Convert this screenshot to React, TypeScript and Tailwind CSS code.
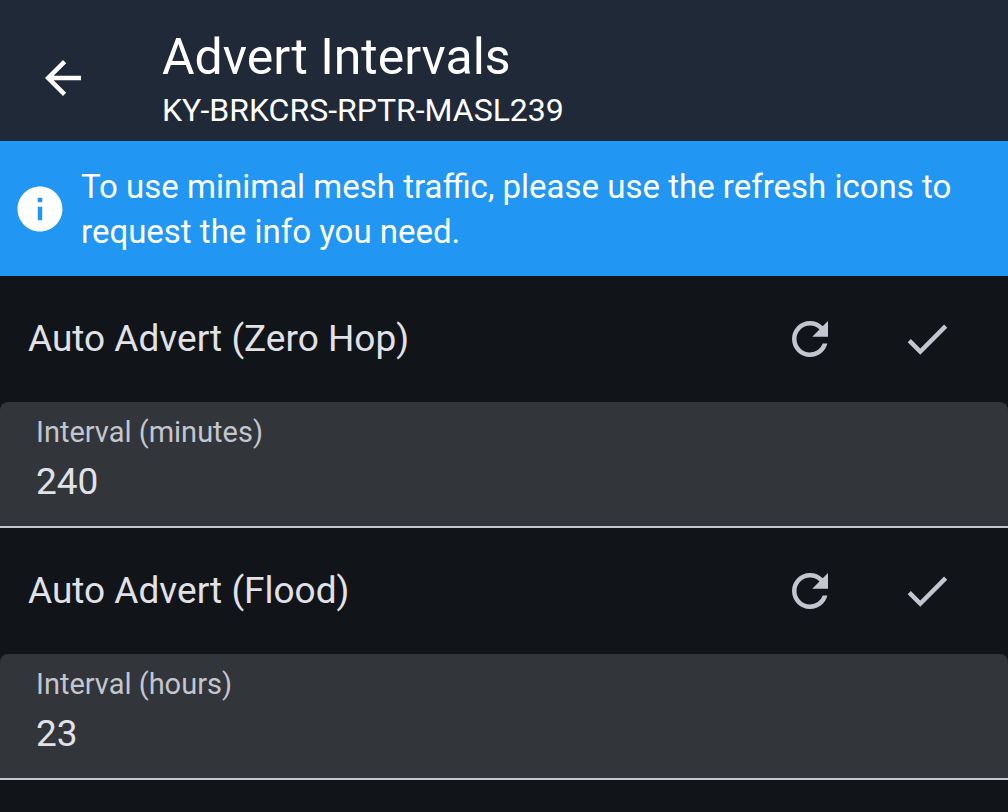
import { useState } from 'react';
import { MdArrowBack, MdCheck, MdInfo, MdRefresh } from 'react-icons/md';

type IntervalSetting = {
  id: string;
  title: string;
  label: string;
  initial: string;
};

const SETTINGS: IntervalSetting[] = [
  { id: 'zero-hop', title: 'Auto Advert (Zero Hop)', label: 'Interval (minutes)', initial: '240' },
  { id: 'flood', title: 'Auto Advert (Flood)', label: 'Interval (hours)', initial: '23' },
];

function IntervalSection({ id, title, label, initial }: IntervalSetting) {
  const [value, setValue] = useState(initial);

  return (
    <section>
      <div className="flex items-center justify-between py-9 pl-7 pr-[54px]">
        <h2 className="text-[37px] leading-[54px]">{title}</h2>
        <div className="flex gap-[63px] text-[#c3c6cf]">
          <button type="button" aria-label={`Refresh ${title}`}>
            <MdRefresh size={54} />
          </button>
          <button type="button" aria-label={`Save ${title}`}>
            <MdCheck size={54} />
          </button>
        </div>
      </div>
      <div className="flex flex-col rounded-t-lg border-b-2 border-[#c3c6cf] bg-[#323539] px-9 pb-[19px] pt-3">
        <label htmlFor={id} className="text-[29px] leading-9 text-[#c3c6cf]">
          {label}
        </label>
        <input
          id={id}
          inputMode="numeric"
          value={value}
          onChange={(e) => setValue(e.target.value)}
          className="mt-[6px] h-[51px] w-full bg-transparent text-[37px] outline-none"
        />
      </div>
    </section>
  );
}

export default function App() {
  return (
    <div className="min-h-screen bg-[#111418] font-[Roboto,sans-serif] text-[#e1e2e8]">
      <header className="flex items-center bg-[#1f2937] pb-[10px] pl-9 pt-6 text-white">
        <button type="button" aria-label="Back" className="mr-[72px]">
          <MdArrowBack size={54} />
        </button>
        <div>
          <h1 className="text-[50px] leading-[66px]">Advert Intervals</h1>
          <p className="text-[32px] leading-[41px]">KY-BRKCRS-RPTR-MASL239</p>
        </div>
      </header>
      <div className="flex items-center gap-[14px] bg-[#2196f3] pb-[22px] pl-[13px] pr-4 pt-[23px] text-white">
        <MdInfo size={54} className="shrink-0" />
        <p className="text-[33px] leading-[45px]">
          To use minimal mesh traffic, please use the refresh icons to request the info you need.
        </p>
      </div>
      <main>
        {SETTINGS.map((setting) => (
          <IntervalSection key={setting.id} {...setting} />
        ))}
      </main>
    </div>
  );
}
